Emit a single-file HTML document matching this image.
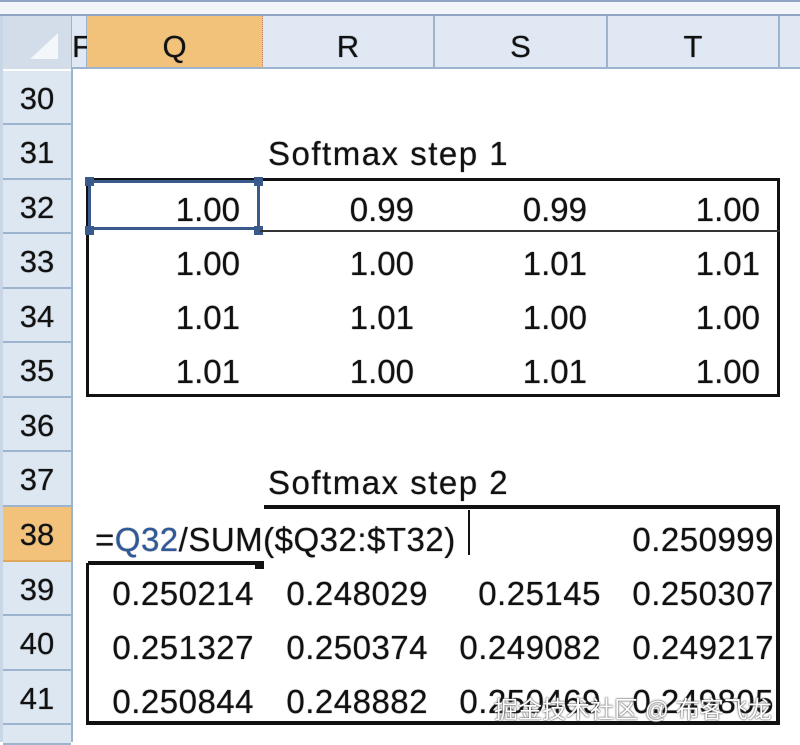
<!DOCTYPE html>
<html><head><meta charset="utf-8"><style>
body{margin:0;width:800px;height:742px;overflow:hidden;background:#fff;position:relative;font-family:"Liberation Sans","Noto Sans CJK SC",sans-serif;color:#111}
.a{position:absolute}
.rh{position:absolute;left:3px;width:68px;background:#dde7f2;border-bottom:2px solid #9db4cf;box-sizing:border-box;text-align:center;font-size:31px;line-height:56px;color:#111;text-shadow:0 0 1px #555}
.ch{position:absolute;top:16px;height:53px;background:#dfe8f3;border-right:2px solid #9db4cf;border-bottom:2px solid #9db4cf;box-sizing:border-box;text-align:center;font-size:31px;line-height:62px;text-shadow:0 0 1px #555}
.v{position:absolute;font-size:33px;line-height:56px;text-align:right;color:#111;text-shadow:0 0 1px #444}
.t{position:absolute;font-size:33px;line-height:56px;text-shadow:0 0 1px #444}
</style></head><body>
<div class="a" style="left:0;top:0;width:800px;height:16px;background:#f2f5f9;border-top:2px solid #8ea6c4;border-bottom:2px solid #8ea6c4;box-sizing:border-box"></div>
<div class="a" style="left:3px;top:16px;width:68px;height:53px;background:#d3dde9;border-right:2px solid #9db4cf"></div>
<div class="a" style="left:30px;top:33px;width:0;height:0;border-left:28px solid transparent;border-bottom:26px solid #f3f6fa"></div>
<div class="a" style="left:0;top:16px;width:3px;height:726px;background:#c9d6e6"></div>
<div class="ch" style="left:72px;width:16px;text-align:left">F</div>
<div class="ch" style="left:87px;width:176px;background:#f2c27b;border-right:1px dotted #b88">Q</div>
<div class="ch" style="left:263px;width:172px">R</div>
<div class="ch" style="left:435px;width:173px">S</div>
<div class="ch" style="left:608px;width:172px">T</div>
<div class="ch" style="left:780px;width:20px;border-right:none"></div>
<div class="a" style="left:71px;top:69px;width:2px;height:673px;background:#9db4cf"></div>

<div class="rh" style="top:71px;height:54px">30</div>
<div class="rh" style="top:125px;height:55px">31</div>
<div class="rh" style="top:180px;height:54px">32</div>
<div class="rh" style="top:234px;height:55px">33</div>
<div class="rh" style="top:289px;height:54px">34</div>
<div class="rh" style="top:343px;height:55px">35</div>
<div class="rh" style="top:398px;height:54px">36</div>
<div class="rh" style="top:452px;height:55px">37</div>
<div class="rh" style="top:507px;height:55px;background:#f2c27b;border-bottom:2px solid #e0a85a">38</div>
<div class="rh" style="top:562px;height:54px">39</div>
<div class="rh" style="top:616px;height:55px">40</div>
<div class="rh" style="top:671px;height:54px">41</div>
<div class="rh" style="top:725px;height:20px"></div>

<div class="t" style="left:268px;top:126px;letter-spacing:1.5px">Softmax step 1</div>
<div class="a" style="left:86px;top:178px;width:694px;height:219px;border:3px solid #111;box-sizing:border-box"></div>
<div class="a" style="left:88px;top:180px;width:172px;height:50px;border:3px solid #3a5a8c;background:#fff;box-sizing:border-box"></div>
<div class="a" style="left:85px;top:177px;width:9px;height:9px;background:#3a5a8c"></div>
<div class="a" style="left:254px;top:177px;width:9px;height:9px;background:#3a5a8c"></div>
<div class="a" style="left:85px;top:226px;width:9px;height:9px;background:#3a5a8c"></div>
<div class="a" style="left:254px;top:226px;width:9px;height:9px;background:#3a5a8c"></div>
<div class="a" style="left:260px;top:230px;width:520px;height:2px;background:#333"></div>

<div class="v" style="left:88px;width:152px;top:182px">1.00</div>
<div class="v" style="left:262px;width:152px;top:182px">0.99</div>
<div class="v" style="left:435px;width:152px;top:182px">0.99</div>
<div class="v" style="left:608px;width:152px;top:182px">1.00</div>
<div class="v" style="left:88px;width:152px;top:236px">1.00</div>
<div class="v" style="left:262px;width:152px;top:236px">1.00</div>
<div class="v" style="left:435px;width:152px;top:236px">1.01</div>
<div class="v" style="left:608px;width:152px;top:236px">1.01</div>
<div class="v" style="left:88px;width:152px;top:290px">1.01</div>
<div class="v" style="left:262px;width:152px;top:290px">1.01</div>
<div class="v" style="left:435px;width:152px;top:290px">1.00</div>
<div class="v" style="left:608px;width:152px;top:290px">1.00</div>
<div class="v" style="left:88px;width:152px;top:344px">1.01</div>
<div class="v" style="left:262px;width:152px;top:344px">1.00</div>
<div class="v" style="left:435px;width:152px;top:344px">1.01</div>
<div class="v" style="left:608px;width:152px;top:344px">1.00</div>

<div class="t" style="left:268px;top:455px;letter-spacing:1.5px">Softmax step 2</div>
<div class="a" style="left:264px;top:505px;width:516px;height:4px;background:#111"></div>
<div class="a" style="left:776px;top:505px;width:4px;height:220px;background:#111"></div>
<div class="a" style="left:86px;top:563px;width:3px;height:162px;background:#111"></div>
<div class="a" style="left:86px;top:721px;width:694px;height:4px;background:#111"></div>
<div class="a" style="left:88px;top:561px;width:167px;height:4px;background:#111"></div>
<div class="a" style="left:255px;top:561px;width:9px;height:8px;background:#111"></div>
<div class="a" style="left:468px;top:510px;width:2px;height:45px;background:#111"></div>
<div class="t" style="left:95px;top:512px;font-size:33px;letter-spacing:0.5px"><span>=</span><span style="color:#2e5a9a">Q32</span>/SUM($Q32:$T32)</div>
<div class="v" style="left:600px;width:174px;top:512px;letter-spacing:0.5px">0.250999</div>

<div class="v" style="left:80px;width:174px;top:566px;letter-spacing:0.5px">0.250214</div>
<div class="v" style="left:254px;width:174px;top:566px;letter-spacing:0.5px">0.248029</div>
<div class="v" style="left:427px;width:174px;top:566px;letter-spacing:0.5px">0.25145</div>
<div class="v" style="left:600px;width:174px;top:566px;letter-spacing:0.5px">0.250307</div>
<div class="v" style="left:80px;width:174px;top:620px;letter-spacing:0.5px">0.251327</div>
<div class="v" style="left:254px;width:174px;top:620px;letter-spacing:0.5px">0.250374</div>
<div class="v" style="left:427px;width:174px;top:620px;letter-spacing:0.5px">0.249082</div>
<div class="v" style="left:600px;width:174px;top:620px;letter-spacing:0.5px">0.249217</div>
<div class="v" style="left:80px;width:174px;top:674px;letter-spacing:0.5px">0.250844</div>
<div class="v" style="left:254px;width:174px;top:674px;letter-spacing:0.5px">0.248882</div>
<div class="v" style="left:427px;width:174px;top:674px;letter-spacing:0.5px">0.250469</div>
<div class="v" style="left:600px;width:174px;top:674px;letter-spacing:0.5px">0.249805</div>
<div class="a" style="left:494px;top:690px;font-size:24px;color:#fff;text-shadow:0 0 2px #555,0 0 1px #333">掘金技术社区 @ 布客飞龙</div>
</body></html>
